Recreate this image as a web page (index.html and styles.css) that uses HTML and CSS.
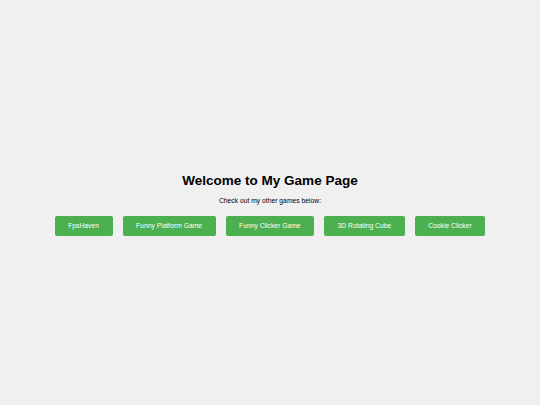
FILE: index.html
```html
<!DOCTYPE html>
<html>
<head>
<meta charset="utf-8">
<title>My Game Page</title>
<link rel="stylesheet" href="styles.css">
</head>
<body>
<div class="page">
  <h1 class="title">Welcome to My Game Page</h1>
  <p class="subtitle">Check out my other games below:</p>
  <div class="games">
    <button class="game-btn">FpsHaven</button>
    <button class="game-btn">Funny Platform Game</button>
    <button class="game-btn">Funny Clicker Game</button>
    <button class="game-btn">3D Rotating Cube</button>
    <button class="game-btn">Cookie Clicker</button>
  </div>
</div>
</body>
</html>
```
FILE: styles.css
```css
html, body {
  margin: 0;
  padding: 0;
  height: 100%;
  background: #f0f0f0;
}
body {
  font-family: "Liberation Sans", Arial, sans-serif;
  color: #000;
}
.page {
  height: 100%;
  display: flex;
  flex-direction: column;
  align-items: center;
  justify-content: center;
  text-align: center;
}
.title {
  font-size: 13.5px;
  line-height: 15.5px;
  font-weight: bold;
  margin: 9px 0 8px;
}
.subtitle {
  font-size: 6.75px;
  line-height: 8px;
  margin: 0 0 6px;
}
.games {
  display: flex;
  justify-content: center;
}
.game-btn {
  font-family: "Liberation Sans", Arial, sans-serif;
  font-size: 6.75px;
  line-height: 8px;
  color: #fff;
  background: #4caf50;
  border: none;
  border-radius: 2px;
  padding: 6px 13.5px;
  margin: 5px;
}
```
